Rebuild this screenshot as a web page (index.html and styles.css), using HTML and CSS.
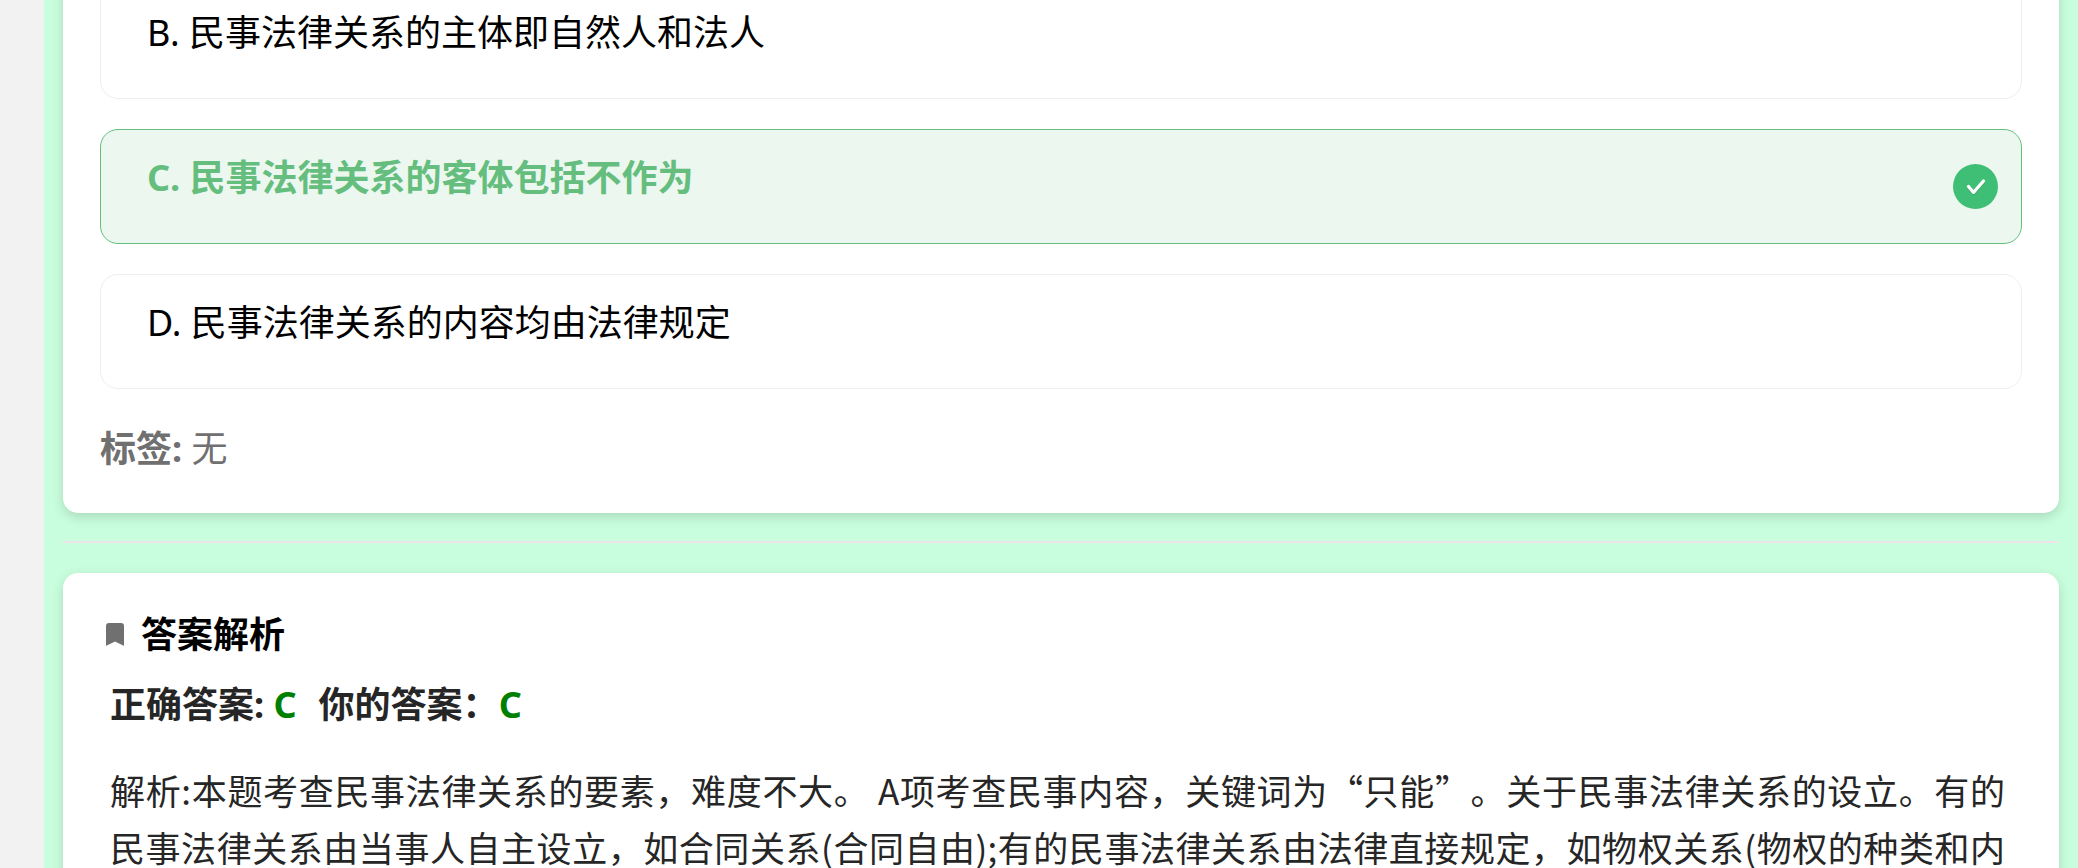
FILE: index.html
```html
<!DOCTYPE html>
<html lang="zh-CN">
<head>
    <meta charset="UTF-8">
    <meta name="viewport" content="width=device-width, initial-scale=1.0">
    <title>答案解析</title>
    <link rel="stylesheet" href="styles.css">
</head>
<body>
    <main class="page">
        <section class="card question">
            <div class="options">
                <label class="option">
                    <input type="radio" name="answer" value="B">
                    <span class="option-text">B. 民事法律关系的主体即自然人和法人</span>
                </label>
                <label class="option correct">
                    <input type="radio" name="answer" value="C" checked>
                    <span class="option-text">C. 民事法律关系的客体包括不作为</span>
                    <svg class="check" viewBox="0 0 45 45" aria-hidden="true">
                        <circle cx="22.5" cy="22.5" r="22.5" fill="#3fbf75"/>
                        <path d="M15.5 23.5L20.5 29.5L30.5 18" fill="none" stroke="#2fa562" stroke-width="3.4" stroke-linecap="round" stroke-linejoin="round"/>
                        <path d="M15.5 22.5L20.5 28.5L30.5 17" fill="none" stroke="#fff" stroke-width="3.4" stroke-linecap="round" stroke-linejoin="round"/>
                    </svg>
                </label>
                <label class="option">
                    <input type="radio" name="answer" value="D">
                    <span class="option-text">D. 民事法律关系的内容均由法律规定</span>
                </label>
            </div>
            <p class="tags"><strong>标签:</strong> 无</p>
        </section>
        <hr class="divider">
        <section class="card analysis">
            <h2 class="title">
                <svg class="bookmark" viewBox="0 0 18 23" aria-hidden="true">
                    <path d="M3 0H15Q18 0 18 3V22.2Q18 23 17.2 22.6L9 18.5L.8 22.6Q0 23 0 22.2V3Q0 0 3 0Z" fill="#707070"/>
                </svg>
                答案解析
            </h2>
            <p class="result">
                <span>正确答案: <span class="right">C</span></span>
                <span>你的答案：<span class="right">C</span></span>
            </p>
            <p class="detail">解析:本题考查民事法律关系的要素，难度不大。 A项考查民事内容，关键词为“只能”。关于民事法律关系的设立。有的<br>民事法律关系由当事人自主设立，如合同关系(合同自由);有的民事法律关系由法律直接规定，如物权关系(物权的种类和内</p>
        </section>
    </main>
</body>
</html>
```

FILE: styles.css
```css
* { box-sizing: border-box; }
body { margin: 0; height: 100vh; overflow: hidden; background: #f2f2f2; color: #000; font-family: "Noto Sans", "Noto Sans CJK SC", sans-serif; font-size: 36px; line-height: 57px; }
.page { margin-left: 44px; padding: 0 19px; background: #c8fedd; display: flow-root; }
.card { background: #fff; border-radius: 15px; box-shadow: 0 4px 12px rgba(0, 0, 0, 0.15); }

/* the first card is scrolled past the top edge */
.question { margin-top: -53px; padding: 37px 37px 36px; }
.options { display: flex; flex-direction: column; gap: 30px; }
.option { display: flex; align-items: center; height: 115px; padding: 0 23px 0 46px; border: 1px solid #eee; border-radius: 18px; }
.option input { appearance: none; width: 0; height: 0; margin: 0; }
.option-text { flex: 1; padding-bottom: 18px; }
.correct { background: #ecf7f0; border-color: #65be7e; color: #65be7e; font-weight: bold; }
.check { width: 45px; height: 45px; }
.tags { margin: 31px 0 0; color: #707070; }

.divider { height: 2px; margin: 28px 0 30px; border: 0; background: #eee4ea; }

.analysis { padding: 33px 54px 20px 47px; }
.title { display: flex; align-items: center; gap: 17px; margin: 0 0 13px; font-size: 36px; }
.bookmark { width: 18px; height: 23px; margin-left: -4px; }
.result { display: flex; gap: 22px; margin: 0 0 28px; color: #262626; font-weight: bold; }
.right { color: #008000; }
.detail { margin: 0; color: #262626; font-family: "Noto Sans CJK SC", sans-serif; font-size: 35px; text-align: justify; text-align-last: justify; text-spacing-trim: space-all; }
```
